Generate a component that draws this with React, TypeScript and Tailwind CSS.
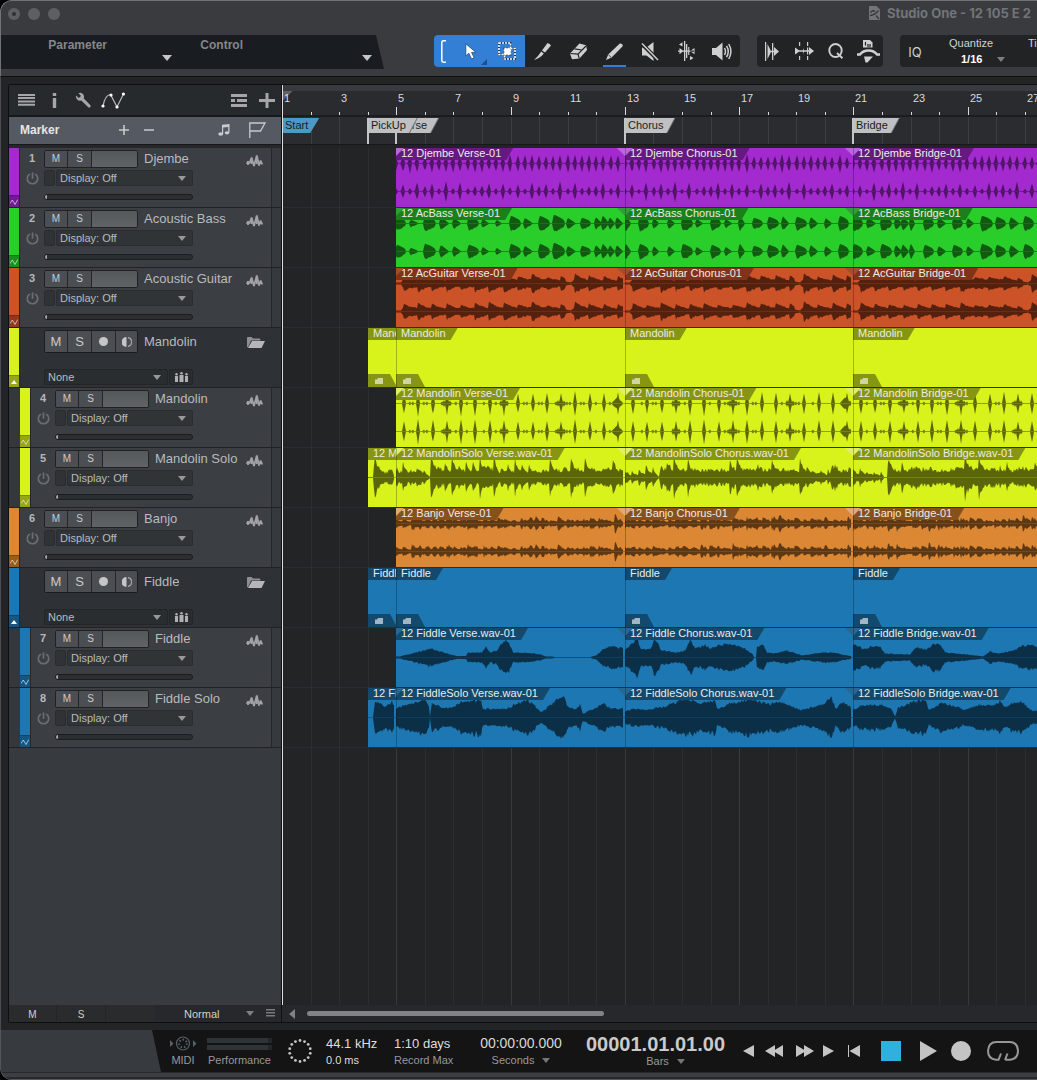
import React from "react";

/* ---------- timeline geometry ---------- */

const BAR_WIDTH = 28.57;
const BAR_COUNT = 48;
const barX = (bar: number) => Math.round((bar - 1) * BAR_WIDTH);
const barSpan = (from: number, to: number) => barX(to) - barX(from);
const bars = Array.from({ length: BAR_COUNT }, (_, i) => i + 1);

/* ---------- waveforms ---------- */

type Points = [number, number][];

function random(seed: number) {
  let s = seed;
  return () => {
    s = (s * 1664525 + 1013904223) % 4294967296;
    return s / 4294967296;
  };
}

function envelope(points: Points, x: number) {
  for (let i = 1; i < points.length; i++) {
    const [x0, a0] = points[i - 1];
    const [x1, a1] = points[i];
    if (x <= x1) return a0 + ((a1 - a0) * (x - x0)) / Math.max(1, x1 - x0);
  }
  return points[points.length - 1][1];
}

const bassVerse = [
  [0, 9, 7], [14, 8, 4], [28, 11, 8], [44, 8, 7], [57, 7, 6], [72, 10, 7], [86, 6, 5], [100, 5, 4],
  [114, 10, 8], [128, 8, 6], [143, 10, 8], [157, 11, 9], [171, 8, 6], [185, 9, 6], [199, 6, 7],
  [206, 6, 9], [213, 5, 7], [220, 6, 7],
];
const bassChorus = [
  [0, 5, 9], [14, 9, 8], [28, 5, 6], [43, 6, 6], [57, 10, 8], [71, 6, 5], [86, 9, 7], [100, 6, 5],
  [114, 5, 9], [128, 9, 6], [143, 10, 7], [157, 6, 8], [171, 10, 7], [185, 7, 7], [200, 6, 6], [214, 9, 8],
];
const bassBridge = [
  [0, 9, 8], [14, 8, 6], [28, 10, 8], [42, 6, 7], [49, 6, 8], [57, 4, 9], [71, 9, 7], [85, 7, 6],
  [100, 9, 7], [114, 6, 6], [128, 11, 8], [143, 9, 7], [157, 8, 7], [171, 9, 8], [185, 9, 6],
];

type Kind = "pulse" | "bass" | "guitar" | "mandolin" | "solo" | "banjo" | "smooth";

function amplitudes(kind: Kind, width: number, seed: number, channel: number, shape?: Points) {
  const rnd = random(seed * 7919 + 13);
  const out = new Array<number>(width + 1).fill(0.3);
  const peak = (at: number, half: number, amp: number) => {
    for (let x = Math.floor(at - half); x <= at + half; x++) {
      if (x < 0 || x > width) continue;
      const a = amp * (1 - Math.abs(x - at) / (half + 0.6));
      out[x] = Math.max(out[x], a);
    }
  };
  if (kind === "pulse") {
    const low = [3, 6, 2, 8, 5, 7, 3, 9, 2, 8, 3, 4, 5, 8, 3, 7];
    for (let i = 0; i * 7.15 < width; i++) {
      const jitter = rnd() * 3;
      const amp = channel === 0 ? 6.5 + jitter : low[i % 16] + jitter / 2;
      peak(Math.round(i * 7.15), 1.8, amp);
    }
  } else if (kind === "mandolin") {
    for (let i = 0; i * 14.28 + 8 < width; i++) {
      const at = Math.round(i * 14.28 + 8);
      const wide = i % 4 === 3;
      peak(at, 1.4, 9.5 + rnd() * 3);
      if (wide) {
        peak(at - 3, 1, 3.5);
        peak(at + 3, 1.2, 3);
      }
      if (rnd() > 0.35) peak(at + 6, 0.9, 2);
      if (rnd() > 0.5) peak(at + 9, 0.9, 2);
    }
    peak(width - 6, 5, 6);
  } else if (kind === "bass") {
    const hits = [bassVerse, bassChorus, bassBridge][seed % 3];
    hits.forEach(([start, len, amp]) => {
      for (let x = 0; x <= len && start + x <= width; x++) {
        const attack = Math.min(1, (x + 1.2) / 2);
        out[start + x] = Math.max(0.3, amp * attack * Math.pow(1 - x / (len + 1), len > 8 ? 0.45 : 0.9));
      }
    });
  } else if (kind === "guitar") {
    let hit = 5;
    for (let x = 0; x <= width; x++) {
      const body = envelope([[0, 1], [5, 1], [7, 4], [60, 3.5], [140, 4.5], [160, 4], [175, 1], [178, 4], [229, 3.5]], x);
      const phase = ((x + 7) % 14.28) / 14.28;
      if (phase < 0.07) hit = 2.5 + rnd() * 4;
      out[x] = body > 2 ? body * (0.75 + 0.3 * rnd()) + hit * Math.pow(1 - phase, 1.6) : body;
    }
  } else if (kind === "banjo") {
    let level = 5;
    let start = 0;
    let next = 0;
    for (let x = 0; x <= width; x++) {
      if (x >= next) {
        start = x;
        next = x + (rnd() > 0.4 ? 7 : 9);
        level = 3.5 + rnd() * 5;
      }
      const phase = (x - start) / 9;
      out[x] = 0.8 + level * (1 - phase * 0.85) * (0.45 + 0.65 * rnd());
    }
  } else if (kind === "solo") {
    let spike = 0;
    for (let x = 0; x <= width; x++) {
      spike *= 0.66;
      if (x % 7 === 0 && rnd() > 0.3) spike = 2 + Math.pow(rnd(), 1.6) * 14;
      const base = envelope(shape ?? [[0, 8], [229, 8]], x);
      out[x] = base < 1 ? 0.4 : base * (0.5 + 0.42 * rnd()) + spike * Math.min(1, base / 7);
    }
  } else {
    for (let x = 0; x <= width; x++) {
      const base = envelope(shape ?? [[0, 8]], x);
      out[x] = base < 1 ? base : base * (0.86 + 0.22 * rnd());
    }
  }
  return out;
}

function wavePath(amps: number[], center: number, skew: number) {
  const rnd = random(amps.length * 31 + skew);
  const top = amps.map((a, x) => `L${x} ${(center - a).toFixed(1)}`).join("");
  const bottom = amps
    .map((a, x) => `L${x} ${(center + a * (a > 2 ? 0.85 + 0.25 * rnd() : 1)).toFixed(1)}`)
    .reverse()
    .join("");
  return `M0 ${center}${top}${bottom}Z`;
}

/* ---------- song data ---------- */

interface Palette { clip: string; label: string; line: string; wave: string; fade: string; foot: string }

const purple: Palette = { clip: "bg-[#a32ace]", label: "bg-[#661a80]", line: "stroke-[#661a80]", wave: "fill-[#4f1466]", fade: "border-[#bd66dc]", foot: "bg-[#6f1d8c]" };
const green: Palette = { clip: "bg-[#2ace2a]", label: "bg-[#1b801b]", line: "stroke-[#1b801b]", wave: "fill-[#125a12]", fade: "border-[#2f9d38]", foot: "bg-[#1e8c20]" };
const red: Palette = { clip: "bg-[#cc5228]", label: "bg-[#803319]", line: "stroke-[#803319]", wave: "fill-[#55210f]", fade: "border-[#a64c2e]", foot: "bg-[#8c3a1c]" };
const yellow: Palette = { clip: "bg-[#d8f21b]", label: "bg-[#879612]", line: "stroke-[#879612]", wave: "fill-[#5b660b]", fade: "border-[#e0ee6a]", foot: "bg-[#96a615]" };
const orange: Palette = { clip: "bg-[#db8733]", label: "bg-[#87511e]", line: "stroke-[#87511e]", wave: "fill-[#5c3814]", fade: "border-[#e3a976]", foot: "bg-[#975c22]" };
const blue: Palette = { clip: "bg-[#1c77b3]", label: "bg-[#12496d]", line: "stroke-[#12496d]", wave: "fill-[#0b2f46]", fade: "border-[#266796]", foot: "bg-[#155682]" };

interface Track {
  name: string;
  number?: number;
  nested?: boolean;
  folder?: boolean;
  pickup?: string;
  labels: [string, string, string];
  palette: Palette;
  kind: Kind;
  mono?: boolean;
  shapes?: Points[];
}

const soloShapes: Points[] = [
  [[0, 12], [6, 7], [26, 7], [31, 4], [34, 1], [36, 13], [48, 9], [75, 8], [95, 12], [105, 3], [112, 8], [130, 7], [170, 10], [229, 10]],
  [[0, 9], [6, 3], [28, 6], [34, 1], [36, 13], [60, 9], [75, 10], [160, 11], [195, 6], [205, 3], [208, 15], [215, 9], [229, 9]],
  [[0, 12], [4, 5], [20, 4], [28, 3], [32, 0], [34, 0], [36, 13], [55, 6], [60, 12], [80, 8], [110, 13], [150, 10], [162, 6], [166, 12], [229, 10]],
  [[0, 0], [5, 0], [6, 14], [15, 6], [24, 10], [26, 2], [28, 0]],
];
const fiddleShapes: Points[] = [
  [[0, 1], [4, 1], [15, 4], [34, 9], [45, 6], [55, 3], [60, 1.5], [70, 1.5], [72, 5], [86, 5], [90, 11], [94, 5], [101, 7], [105, 13], [110, 19], [114, 13], [117, 5], [130, 5], [145, 3], [150, 1], [158, 0.8], [159, 0.3], [194, 0.3], [200, 2], [208, 9], [215, 12], [225, 10], [229, 8]],
  [[0, 8], [5, 12], [12, 19], [16, 9], [25, 8], [30, 19], [36, 8], [50, 5], [60, 7], [66, 18], [70, 9], [75, 11], [80, 13], [85, 9], [95, 13], [108, 13], [120, 9], [128, 3], [129, 0.3], [131, 0.3], [132, 12], [138, 13], [142, 5], [148, 4], [163, 7], [177, 2], [195, 5], [210, 5], [222, 2], [229, 1]],
  [[0, 12], [5, 13], [10, 8], [20, 12], [27, 11], [32, 4], [57, 3], [63, 11], [73, 8], [80, 13], [88, 13], [92, 5], [115, 3], [130, 1], [137, 6], [145, 4], [160, 7], [170, 12], [180, 12], [190, 10], [229, 8]],
];
const fiddleSoloShapes: Points[] = [
  [[0, 9], [12, 14], [30, 17], [33, 12], [34, 0.5], [36, 15], [45, 11], [57, 10], [62, 15], [85, 18], [87, 9], [110, 9], [130, 18], [138, 13], [145, 5], [157, 15], [168, 23], [171, 11], [180, 8], [184, 13], [187, 4], [200, 10], [208, 14], [215, 9], [229, 9]],
  [[0, 6], [10, 9], [20, 8], [40, 11], [60, 19], [75, 15], [90, 17], [92, 9], [105, 14], [125, 18], [145, 14], [155, 16], [175, 8], [190, 11], [200, 14], [206, 21], [211, 9], [218, 16], [229, 8]],
  [[0, 8], [10, 13], [30, 13], [38, 9], [42, 1], [45, 10], [60, 16], [72, 18], [76, 8], [90, 15], [112, 8], [125, 13], [140, 12], [147, 17], [152, 10], [162, 16], [170, 15], [180, 6], [190, 9], [229, 8]],
  [[0, 0], [5, 0], [7, 17], [15, 12], [18, 11], [24, 17], [26, 12], [27, 0], [28, 0]],
];

const labels = (prefix: string, suffix = ""): [string, string, string] => [
  `${prefix} Verse${suffix}-01`,
  `${prefix} Chorus${suffix}-01`,
  `${prefix} Bridge${suffix}-01`,
];

const tracks: Track[] = [
  { number: 1, name: "Djembe", labels: labels("12 Djembe"), palette: purple, kind: "pulse" },
  { number: 2, name: "Acoustic Bass", labels: labels("12 AcBass"), palette: green, kind: "bass" },
  { number: 3, name: "Acoustic Guitar", labels: labels("12 AcGuitar"), palette: red, kind: "guitar" },
  { folder: true, name: "Mandolin", pickup: "Mandolin", labels: ["Mandolin", "Mandolin", "Mandolin"], palette: yellow, kind: "solo" },
  { number: 4, nested: true, name: "Mandolin", labels: labels("12 Mandolin"), palette: yellow, kind: "mandolin" },
  { number: 5, nested: true, name: "Mandolin Solo", pickup: "12 MandolinSolo", labels: labels("12 MandolinSolo", ".wav"), palette: yellow, kind: "solo", mono: true, shapes: soloShapes },
  { number: 6, name: "Banjo", labels: labels("12 Banjo"), palette: orange, kind: "banjo" },
  { folder: true, name: "Fiddle", pickup: "Fiddle", labels: ["Fiddle", "Fiddle", "Fiddle"], palette: blue, kind: "smooth" },
  { number: 7, nested: true, name: "Fiddle", labels: labels("12 Fiddle", ".wav"), palette: blue, kind: "smooth", mono: true, shapes: fiddleShapes },
  { number: 8, nested: true, name: "Fiddle Solo", pickup: "12 FiddleSolo", labels: labels("12 FiddleSolo", ".wav"), palette: blue, kind: "smooth", mono: true, shapes: fiddleSoloShapes },
];

/* ---------- small icons ---------- */

const Down = ({ className = "" }: { className?: string }) => (
  <svg className={`h-[5px] w-2 shrink-0 ${className}`} viewBox="0 0 8 5" aria-hidden="true">
    <path d="M0 0H8L4 5Z" fill="currentColor" />
  </svg>
);

const DownLarge = () => (
  <svg className="mt-[19px] h-[6px] w-[10px] shrink-0 text-[#c4c6c8]" viewBox="0 0 10 6" aria-hidden="true">
    <path d="M0 0H10L5 6Z" fill="currentColor" />
  </svg>
);

const Automation = () => (
  <svg className="h-2 w-2" viewBox="0 0 8 8" fill="none" stroke="currentColor" strokeWidth="1" aria-hidden="true">
    <path d="M0 5.5L2.3 2L5 6.5L7.8 1.5" />
  </svg>
);

const TrackWave = () => (
  <svg className="h-[14px] w-[17px]" viewBox="0 0 17 14" fill="none" stroke="#a0a2a5" strokeWidth="1.8" strokeLinejoin="bevel" aria-hidden="true">
    <path d="M.8 10L2 7.500L3.400 9.500L5.600 3.500L8 12L10.800 1.500L13 11.500L14.600 6.500L16.200 10.500" />
    <path d="M5.600 5V10M10.800 5V10M2 8V11M14.500 8V10" />
  </svg>
);

const Power = () => (
  <svg className="h-[13px] w-[13px]" viewBox="0 0 13 13" fill="none" stroke="currentColor" strokeWidth="1.7" strokeLinecap="round" aria-hidden="true">
    <path d="M3.4 2.4A5.2 5.2 0 1 0 9.6 2.4M6.5 1V6" />
  </svg>
);

const FolderOpen = () => (
  <svg className="h-[11px] w-[18px]" viewBox="0 0 18 11" fill="#b4b6b8" aria-hidden="true">
    <path d="M0 10V1Q0 0 1 0H4.5L6 1.5H12.5Q13.5 1.5 13.5 3.5H4L1 10.500Z" fill="#8c8e91" />
    <path d="M5 4H18L14.5 11H1Z" />
  </svg>
);

/* ---------- header ---------- */

const toolClass = "flex h-8 items-center justify-center text-[#cfcfcf]";

const Cut = () => (
  <svg width="17" height="17" viewBox="0 0 17 17" fill="currentColor" aria-hidden="true">
    <path d="M13.500 0Q16 .5 17 2.500L11 9.5L8 7.5ZM7.2 8.5L9.8 10.5Q7 14.5 0 17Q4.5 13 7.2 8.5Z" />
  </svg>
);
const Eraser = () => (
  <svg width="17" height="17" viewBox="0 0 17 17" aria-hidden="true">
    <path d="M9.500 .5L16 2.2L17 7L9.5 15.5L2 16.2L0 10.5Z" fill="#cfcfcf" />
    <path d="M.5 10.5L8 11.2L16 3M8 11.2L9.3 15.6M4.500 5.8L12 7" fill="none" stroke="#222" strokeWidth="1.2" />
  </svg>
);
const Paint = () => (
  <svg width="17" height="17" viewBox="0 0 17 17" fill="currentColor" aria-hidden="true">
    <path d="M13.800 .4Q17 .3 16.7 3.2L5.6 14.4L0 17L2.2 11.4Z" />
    <path d="M2.4 11.8L5.2 14.4" stroke="#222" strokeWidth=".8" />
  </svg>
);
const Mute = () => (
  <svg width="18" height="19" viewBox="0 0 18 19" aria-hidden="true">
    <path d="M1 5.5H5.500L12.500 0V19L5.500 13.5H1Z" fill="#cfcfcf" />
    <path d="M1 2L17 18" stroke="#222" strokeWidth="4" />
    <path d="M1 1.5L17 18" stroke="#cfcfcf" strokeWidth="1.5" />
  </svg>
);
const Bend = () => (
  <svg width="17" height="20" viewBox="0 0 17 20" fill="currentColor" aria-hidden="true">
    <path d="M6 0H7.300V20H6ZM8 3H9.300V17H8ZM10.200 6H11.300V14H10.200Z" />
    <path d="M0 9.400H17V10.800H0ZM1.500 7L5.500 10.100L1.500 13.200ZM16.500 7L12 10.100L16.500 13.200Z" />
    <path d="M4.500 1.200V5.500L1 3.400ZM12 15L15.500 17L12 19.200Z" />
  </svg>
);
const Speaker = () => (
  <svg width="20" height="19" viewBox="0 0 20 19" aria-hidden="true">
    <path d="M0 6H4L10.5 .5V18.5L4 13H0Z" fill="#cfcfcf" />
    <path d="M12.5 6Q14.5 9.5 12.5 13M14.5 3.8Q18 9.5 14.5 15.2M16.800 2Q21 9.5 16.800 17" stroke="#cfcfcf" strokeWidth="1.5" fill="none" />
  </svg>
);

function Header() {
  return (
    <header className="flex h-[76px] shrink-0 flex-col overflow-hidden rounded-tl-xl border-t border-l border-[#6e7476] bg-[#393b3f]">
      <div className="flex h-[34px] shrink-0 items-start justify-between">
        <div className="flex gap-2 pt-[7px] pl-[7px]">
          <button type="button" aria-label="Close" className="flex size-3 items-center justify-center rounded-full bg-[#5c6063]">
            <span className="size-1 rounded-full bg-[#2e3032]" />
          </button>
          <button type="button" aria-label="Minimise" className="size-3 rounded-full bg-[#5c6063]" />
          <button type="button" aria-label="Zoom" className="size-3 rounded-full bg-[#5c6063]" />
        </div>
        <div className="flex w-[168px] shrink-0 items-center gap-[7px] pt-[3px] text-[#727477]">
          <svg className="h-[14px] w-[11px] shrink-0" viewBox="0 0 11 14" aria-hidden="true">
            <path d="M0 0H7.5L11 3.5V14H0Z" fill="currentColor" />
            <path d="M1.5 6.500Q4 3.500 6 5.500M1 9.500Q6 9 9.500 4.500M7 9.500L10 13" fill="none" stroke="#393b3f" strokeWidth="1.400" />
          </svg>
          <h1 className="font-['Inter',sans-serif] text-[13px] leading-[18px] font-bold whitespace-nowrap">Studio One - 12 105 E 2</h1>
        </div>
      </div>
      <div className="flex h-[34px] items-start">
        <div className="flex h-[34px] w-[383px] shrink-0 bg-[#191c21] text-[12px] font-bold text-[#85878a] [clip-path:polygon(0_0,375px_0,100%_100%,0_100%)]">
          <button type="button" className="flex w-[171px] justify-end gap-[55px] pt-px">
            <span>Parameter</span>
            <DownLarge />
          </button>
          <button type="button" className="flex w-[200px] justify-end gap-[119px] pt-px">
            <span>Control</span>
            <DownLarge />
          </button>
        </div>
        <div className="ml-[50px] flex h-8 w-[306px] shrink-0 items-center overflow-hidden rounded-[4px] bg-[#222325]">
          <div className="flex h-8 w-[91px] items-center bg-[#337fd6] text-white">
            <svg className="ml-[7px]" width="5" height="23" viewBox="0 0 5 23" fill="none" stroke="#fff" strokeWidth="1.5" aria-hidden="true">
              <path d="M5 .8H2.5Q.8 .8 .8 2.5V20.5Q.8 22.2 2.5 22.2H5" />
            </svg>
            <button type="button" aria-label="Arrow tool" className="flex h-8 w-[41px] items-center justify-end gap-1">
              <svg width="12" height="17" viewBox="0 0 12 17" aria-hidden="true">
                <path d="M.8 .8V13L3.8 10.2L6.6 16L9.2 14.8L6.6 9.4H11Z" fill="#fff" stroke="#1c4a80" strokeWidth=".8" />
              </svg>
              <svg className="mt-[21px]" width="6" height="6" viewBox="0 0 6 6" aria-hidden="true">
                <path d="M6 0V6H0Z" fill="#1d4f8b" />
              </svg>
            </button>
            <button type="button" aria-label="Range tool" className="flex h-8 w-[38px] items-center justify-center pl-px">
              <svg width="18" height="18" viewBox="0 0 18 18" fill="none" aria-hidden="true">
                <path d="M1 1H12.5V12.5H1ZM6.5 6.5H17V17H6.5Z" stroke="#143a66" strokeWidth="2" />
                <path d="M1 1H12.5V12.5H1ZM6.5 6.5H17V17H6.5Z" stroke="#fff" strokeWidth="1.6" strokeDasharray="2 1" />
                <path d="M6.5 6.5H12.5V12.5H6.5Z" fill="#fff" />
              </svg>
            </button>
          </div>
          <button type="button" aria-label="Split tool" className={`${toolClass} w-9`}><Cut /></button>
          <button type="button" aria-label="Eraser tool" className={`${toolClass} w-9`}><Eraser /></button>
          <button type="button" aria-label="Paint tool" className={`${toolClass} w-9 bg-[linear-gradient(#337fd6,#337fd6)] bg-[length:23px_2px] bg-[position:center_bottom] bg-no-repeat`}><Paint /></button>
          <button type="button" aria-label="Mute tool" className={`${toolClass} w-9`}><Mute /></button>
          <button type="button" aria-label="Bend tool" className={`${toolClass} w-9`}><Bend /></button>
          <button type="button" aria-label="Listen tool" className={`${toolClass} w-9`}><Speaker /></button>
        </div>
        <div className="ml-[17px] flex h-8 w-[126px] shrink-0 items-center rounded-[4px] bg-[#222325]">
          <button type="button" aria-label="Detect transients" className={`${toolClass} w-[29px]`}>
            <svg width="14" height="19" viewBox="0 0 14 19" fill="currentColor" aria-hidden="true">
              <path d="M0 0H1.200V19H0ZM2.500 2L5.500 8V11L2.500 17ZM7 1H8.3V18H7ZM5 8.8H11V10.2H5ZM9 5L14 9.5L9 14Z" />
            </svg>
          </button>
          <button type="button" aria-label="Stretch" className={`${toolClass} w-9`}>
            <svg width="19" height="18" viewBox="0 0 19 18" fill="currentColor" aria-hidden="true">
              <path d="M4 0H5.2V4H4ZM4 14H5.2V18H4ZM12 0H13.2V4H12ZM12 14H13.2V18H12ZM1 8.3H15V9.7H1ZM0 5.5L5 9L0 12.5ZM14 5L19 9L14 13ZM8 6L9.2 9L8 12ZM12 5.5H13.2V12.5H12Z" />
            </svg>
          </button>
          <button type="button" aria-label="Quantize" className={`${toolClass} w-[28px]`}>
            <svg width="16" height="16" viewBox="0 0 16 16" fill="none" stroke="currentColor" strokeWidth="1.9" aria-hidden="true">
              <ellipse cx="7.5" cy="7.5" rx="6.2" ry="6.5" />
              <path d="M9 10L14.5 15.2" />
            </svg>
          </button>
          <button type="button" aria-label="Audio bend" className={`${toolClass} flex-1 pl-1`}>
            <svg width="23" height="23" viewBox="0 0 23 23" fill="currentColor" aria-hidden="true">
              <path d="M6 0H13L15.5 2.5V7.500H6Z" />
              <path d="M8.500 2V5.500M11 4V7.500M13 4V7.500" stroke="#222" strokeWidth="1.200" />
              <path d="M0 14.5H3Q6 10.500 11.5 10.500T20 14.5H23" fill="none" stroke="currentColor" strokeWidth="2.4" />
              <path d="M7 16.500H16L10.5 22.5L8.5 22.5Z" />
            </svg>
          </button>
        </div>
        <div className="ml-[17px] flex h-8 w-[260px] shrink-0 rounded-[4px] bg-[#222325] text-[11px] leading-4 text-[#cfcfcf]">
          <button type="button" className="w-[30px] pt-px font-['Inter',sans-serif] text-[13px]">IQ</button>
          <div className="flex w-[82px] flex-col items-center text-[#d2d2d2]">
            <label htmlFor="quantize">Quantize</label>
            <div className="flex items-center gap-2 pl-6">
              <select id="quantize" className="w-[28px] appearance-none bg-transparent font-bold text-white outline-none"><option>1/16</option></select>
              <Down className="text-[#7c7e80]" />
            </div>
          </div>
          <div className="flex w-[80px] flex-col items-center text-[#d2d2d2]">
            <label htmlFor="timebase">Timebase</label>
            <select id="timebase" className="w-9 appearance-none bg-transparent pl-1 font-bold text-white outline-none"><option>Bars</option></select>
          </div>
        </div>
      </div>
    </header>
  );
}

/* ---------- track list ---------- */

function TrackTools() {
  return (
    <div className="flex h-[32px] items-center border-b-2 border-[#17181a] bg-[#272a2d] pr-[6px] pl-[9px] text-[#a4a6a8]">
      <button type="button" aria-label="Track list">
        <svg width="17" height="12" viewBox="0 0 17 12" fill="currentColor" aria-hidden="true"><path d="M0 0H17V2H0ZM0 3H17V5H0ZM0 6.5H17V8.5H0ZM0 9.7H17V11.7H0Z" /></svg>
      </button>
      <button type="button" aria-label="Inspector" className="ml-[17px]">
        <svg width="5" height="15" viewBox="0 0 5 15" fill="currentColor" aria-hidden="true"><path d="M.8 0H4.2V3H.8ZM.8 5H4.2V15H.8Z" /></svg>
      </button>
      <button type="button" aria-label="Options" className="ml-[18px]">
        <svg width="16" height="16" viewBox="0 0 16 16" aria-hidden="true">
          <path d="M1.2 3.5L3.8 6.1L6 3.9L3.5 1.2A4 4 0 0 1 9 5.6L8.6 6.3L15.2 12.9A1.4 1.4 0 0 1 13 15.1L6.3 8.5A4 4 0 0 1 1.2 3.5Z" fill="currentColor" />
        </svg>
      </button>
      <button type="button" aria-label="Automation" className="ml-[10px]">
        <svg width="24" height="17" viewBox="0 0 24 17" fill="none" stroke="#b8babc" strokeWidth="1.2" aria-hidden="true">
          <path d="M2 14Q4 3 9.500 2.500L16 15L22.500 2" />
          <g fill="#fff" stroke="none"><circle cx="2" cy="14" r="1.6" /><circle cx="10" cy="3" r="1.6" /><circle cx="16" cy="15" r="1.6" /><circle cx="22.400" cy="2" r="1.600" /></g>
        </svg>
      </button>
      <div className="flex-1" />
      <button type="button" aria-label="Groups">
        <svg width="16" height="13" viewBox="0 0 16 13" fill="currentColor" aria-hidden="true"><path d="M0 0H16V3H0ZM0 5H4V8H0ZM6 5H16V8H6ZM0 10H16V13H0Z" /></svg>
      </button>
      <button type="button" aria-label="Add track" className="ml-3">
        <svg width="16" height="15" viewBox="0 0 16 15" fill="currentColor" aria-hidden="true"><path d="M6.500 0H9.500V6H16V9H9.500V15H6.500V9H0V6H6.500Z" /></svg>
      </button>
    </div>
  );
}

function MarkerHeader() {
  return (
    <div className="flex h-[27px] items-center bg-[#555961] pr-[15px] pb-px pl-[11px] text-[#c8cacc]">
      <span className="w-[99px] text-[12px] font-bold text-[#e4e5e6]">Marker</span>
      <button type="button" aria-label="Add marker">
        <svg width="10" height="10" viewBox="0 0 10 10" stroke="currentColor" strokeWidth="1.600" aria-hidden="true"><path d="M5 0V10M0 5H10" /></svg>
      </button>
      <button type="button" aria-label="Remove marker" className="ml-[15px]">
        <svg width="10" height="10" viewBox="0 0 10 10" stroke="currentColor" strokeWidth="1.600" aria-hidden="true"><path d="M0 5H10" /></svg>
      </button>
      <div className="flex-1" />
      <button type="button" aria-label="Timebase">
        <svg width="12" height="12" viewBox="0 0 12 12" fill="currentColor" aria-hidden="true">
          <path d="M4 .8L11.500 0V8.500H10.200V3L5.200 3.500V10H4Z" />
          <ellipse cx="2.700" cy="10" rx="2.500" ry="1.700" /><ellipse cx="9" cy="8.800" rx="2.300" ry="1.600" />
        </svg>
      </button>
      <button type="button" aria-label="Marker flag" className="ml-[19px]">
        <svg width="17" height="16" viewBox="0 0 17 16" fill="none" stroke="currentColor" strokeWidth="1.300" aria-hidden="true"><path d="M.8 16V1H16L11.500 9H.8" /></svg>
      </button>
    </div>
  );
}

const keyClass = "border-r border-[#232527] bg-[#4b4e52] text-center";
const selectClass = "h-4 w-full appearance-none rounded-[2px] border pl-[3px] text-[11px] leading-[13px] text-[#b9bbbd] outline-none";

function AudioHeader({ track }: { track: Track }) {
  return (
    <>
      <div className="flex w-6 flex-col items-center pt-px text-[#b6b8ba]">
        <span className="text-[11px] leading-[18px] font-bold">{track.number}</span>
        <button type="button" aria-label={`Power ${track.name}`} className="mt-[5px] text-[#6b6e71]"><Power /></button>
      </div>
      <div className="flex min-w-0 flex-1 flex-col">
        <div className="flex h-[22px] items-center">
          <div className="flex h-[18px] w-[94px] shrink-0 overflow-hidden rounded-[2px] border border-[#1f2123] text-[10px] leading-4 text-[#c9cbcd]">
            <button type="button" aria-label={`Mute ${track.name}`} className={`${keyClass} w-[23px]`}>M</button>
            <button type="button" aria-label={`Solo ${track.name}`} className={`${keyClass} w-[24px]`}>S</button>
            <span className="flex-1 bg-linear-to-b from-[#54585b] to-[#606467]" />
          </div>
          <span className="ml-[6px] flex-1 text-[13px] whitespace-nowrap text-[#b9bbbd]">{track.name}</span>
        </div>
        <div className="flex h-4 w-[149px] gap-px group-data-nested:w-[138px]">
          <span className="w-[11px] rounded-[2px] border border-[#2a2c2f] bg-[#303336]" />
          <div className="relative flex flex-1 items-center">
            <select aria-label={`${track.name} automation`} className={`${selectClass} border-[#2a2c2f] bg-[#303437]`}><option>Display: Off</option></select>
            <Down className="pointer-events-none absolute right-[7px] text-[#96989a]" />
          </div>
        </div>
        <input
          type="range"
          aria-label={`${track.name} value`}
          defaultValue={0}
          className="mt-2 h-[6px] w-[149px] appearance-none overflow-hidden rounded-full border border-[#1b1d1f] bg-[#2c2f32] group-data-nested:w-[138px] [&::-webkit-slider-thumb]:h-1 [&::-webkit-slider-thumb]:w-[2px] [&::-webkit-slider-thumb]:appearance-none [&::-webkit-slider-thumb]:bg-[#a6a8aa]"
        />
      </div>
      <div className="w-[25px] pt-[6px]"><TrackWave /></div>
      <div className="w-[10px] border-l border-[#25272a] bg-[#36393e]" />
    </>
  );
}

function FolderHeader({ track }: { track: Track }) {
  return (
    <>
      <div className="w-6" />
      <div className="flex min-w-0 flex-1 flex-col pt-[2px]">
        <div className="flex h-[23px] items-center">
          <div className="flex h-[23px] w-[94px] shrink-0 overflow-hidden rounded-[2px] border border-[#1b1d1f] text-[13px] leading-5 text-[#c9cbcd]">
            <button type="button" aria-label={`Mute ${track.name} folder`} className={`${keyClass} w-[23px]`}>M</button>
            <button type="button" aria-label={`Solo ${track.name} folder`} className={`${keyClass} w-[24px]`}>S</button>
            <button type="button" aria-label={`Record ${track.name} folder`} className={`${keyClass} flex w-6 items-center justify-center`}>
              <span className="size-[9px] rounded-full bg-[#c4c6c8]" />
            </button>
            <button type="button" aria-label={`Monitor ${track.name} folder`} className="flex flex-1 items-center justify-center bg-[#4b4e52]">
              <svg width="10" height="10" viewBox="0 0 10 10" aria-hidden="true"><path d="M4.500 0V10A5 5 0 0 1 4.500 0Z" fill="#c4c6c8" /><path d="M6 .5A4.600 4.600 0 0 1 6 9.500" fill="none" stroke="#a4a6a8" strokeWidth="1.300" /></svg>
            </button>
          </div>
          <span className="ml-[6px] flex-1 text-[13px] whitespace-nowrap text-[#b9bbbd]">{track.name}</span>
        </div>
        <div className="mt-4 flex h-4 w-[149px] gap-px">
          <div className="relative flex flex-1 items-center">
            <select aria-label={`${track.name} bus`} className={`${selectClass} border-[#232629] bg-[#2a2d30]`}><option>None</option></select>
            <Down className="pointer-events-none absolute right-[7px] text-[#96989a]" />
          </div>
          <button type="button" aria-label={`Group ${track.name}`} className="flex w-6 items-center justify-center rounded-[2px] border border-[#232629] bg-[#2a2d30]">
            <svg width="13" height="10" viewBox="0 0 13 10" fill="#aeb0b2" aria-hidden="true"><path d="M0 4H3V10H0ZM4.500 3H8.500V10H4.500ZM10 4H13V10H10Z" /><circle cx="1.500" cy="2.300" r="1.200" /><circle cx="6.500" cy="1.300" r="1.300" /><circle cx="11.500" cy="2.300" r="1.200" /></svg>
          </button>
        </div>
      </div>
      <div className="w-[34px] pt-[9px]"><FolderOpen /></div>
    </>
  );
}

function TrackHeader({ track }: { track: Track }) {
  return (
    <li
      data-nested={track.nested ? "" : undefined}
      className={`group flex h-[60px] border-b border-[#202224] data-nested:pl-[11px] ${track.folder ? "bg-[#2e3135]" : track.nested ? "bg-[#3b3e43] bg-[linear-gradient(90deg,#34373c_11px,transparent_11px)]" : "bg-[#3b3e43]"}`}
    >
      <div className={`flex w-[11px] flex-col justify-end border-r border-[#25272a] ${track.palette.clip}`}>
        <span className={`flex h-3 items-center justify-center border-t border-black/20 text-white/60 ${track.palette.foot}`}>
          {track.folder ? (
            <svg className="h-1 w-[6px]" viewBox="0 0 6 4" aria-hidden="true"><path d="M3 0L6 4H0Z" fill="#fff" /></svg>
          ) : (
            <Automation />
          )}
        </span>
      </div>
      {track.folder ? <FolderHeader track={track} /> : <AudioHeader track={track} />}
    </li>
  );
}

function TrackList() {
  return (
    <aside className="flex w-[273px] shrink-0 flex-col border-r border-[#101112] bg-[#373b40]">
      <TrackTools />
      <MarkerHeader />
      <div className="h-1 border-t border-[#17181a] bg-[#25272a]" />
      <ul className="flex flex-col">
        {tracks.map((track) => <TrackHeader key={`${track.number ?? "folder"}-${track.name}`} track={track} />)}
      </ul>
      <div className="flex-1" />
      <div className="flex h-[17px] items-center bg-[#26282b] text-[11px] leading-[17px] text-[#d0d1d3]">
        <button type="button" className="h-[17px] w-[48px] border-r border-[#232527] bg-[#2a2b2c] pt-px text-[10px]">M</button>
        <button type="button" className="h-[17px] w-[49px] border-r border-[#232527] bg-[#2a2b2c] pt-px text-[10px]">S</button>
        <span className="h-[17px] w-12 bg-[#2a2b2c]" />
        <div className="relative flex flex-1 items-center">
          <select aria-label="Track height" className="w-full appearance-none bg-transparent pt-px pl-[30px] outline-none"><option>Normal</option></select>
          <Down className="pointer-events-none absolute right-[27px] text-[#7e8082]" />
          <svg className="pointer-events-none absolute right-[6px]" width="9" height="9" viewBox="0 0 9 9" fill="#77797d" aria-hidden="true"><path d="M0 0H9V1.500H0ZM0 3H9V4.500H0ZM0 6H9V7.500H0Z" /></svg>
        </div>
      </div>
    </aside>
  );
}

/* ---------- timeline ---------- */

function Grid({ tone }: { tone: "marker" | "lane" }) {
  return (
    <div className="pointer-events-none absolute inset-0 flex overflow-hidden" aria-hidden="true">
      {bars.map((bar) => (
        <span
          key={bar}
          style={{ width: barSpan(bar, bar + 1) }}
          className={`shrink-0 border-l ${tone === "marker" ? "border-[#3c3e40]" : bar % 4 === 1 ? "border-[#38393b]" : "border-[#2c2e30]"}`}
        />
      ))}
    </div>
  );
}

function Ruler() {
  return (
    <div className="flex h-[32px] border-t-[6px] border-b-2 border-t-[#393a3f] border-b-[#1b1c1e] bg-[#292b2e]">
      {bars.map((bar) => (
        <div key={bar} style={{ width: barSpan(bar, bar + 1) }} className="flex shrink-0 flex-col justify-between">
          <span className={`h-4 pl-[2px] text-[11px] leading-[15px] whitespace-nowrap text-[#d9dadb] ${bar === 1 ? "bg-[linear-gradient(135deg,#5e6065_7px,transparent_8px)]" : ""}`}>
            {bar % 2 ? bar : ""}
          </span>
          {bar > 1 && <span className={`w-px bg-[#d8d9da] ${bar % 4 === 1 ? "h-2" : "h-[3px]"}`} />}
        </div>
      ))}
    </div>
  );
}

const markers = [
  { name: "Verse", bar: 5 },
  { name: "PickUp", bar: 4 },
  { name: "Chorus", bar: 13 },
  { name: "Bridge", bar: 21 },
];

function MarkerLane() {
  return (
    <div className="relative h-[27px] overflow-hidden bg-[#2b2c2f] text-[11px] leading-[14px] text-[#1c1d1e]">
      <Grid tone="marker" />
      <span className="absolute top-px left-0 h-[15px] bg-[#4b99c7] pr-[11px] pl-[3px] [clip-path:polygon(0_0,100%_0,calc(100%-9px)_100%,0_100%)]">Start</span>
      {markers.map((marker) => (
        <span key={marker.name} style={{ left: barX(marker.bar) - 1 }} className="absolute top-px h-[26px] border-l-2 border-[#c4c5c6]">
          <span className="block bg-[#6d6f71] [clip-path:polygon(0_0,100%_0,calc(100%-8px)_100%,0_100%)]">
            <span className="block h-[15px] bg-[#bfc0c1] pr-[12px] pl-[2px] [clip-path:polygon(0_0,calc(100%-1px)_0,calc(100%-9px)_100%,0_100%)]">{marker.name}</span>
          </span>
        </span>
      ))}
    </div>
  );
}

function Clip({ track, label, section, from, to }: { track: Track; label: string; section: number; from: number; to: number }) {
  const width = barSpan(from, to);
  const { palette } = track;
  const channels = track.folder ? [] : track.mono ? [29] : [15, 43];
  const seed = track.kind === "bass" ? section : (track.number ?? 0) * 11 + section;
  const pickup = section === 3;
  const edge = section === 1 || section === 2 || (section === 0 && track.pickup !== undefined);
  return (
    <div style={{ width }} className={`relative flex h-[59px] shrink-0 flex-col items-start justify-between overflow-hidden ${palette.clip}`}>
      {channels.length > 0 && (
        <svg className={`absolute inset-0 ${palette.wave}`} width={width} height="59" viewBox={`0 0 ${width} 59`} aria-hidden="true">
          {channels.map((center, i) => (
            <path key={center} d={wavePath(amplitudes(track.kind, width - 2, seed, i, track.shapes?.[section]), center + 0.5, section)} />
          ))}
          {channels.map((center) => (
            <path key={`line-${center}`} d={`M0 ${center}.5H${width}`} className={palette.line} strokeOpacity=".6" />
          ))}
        </svg>
      )}
      <span className={`relative h-3 pr-3 pl-[5px] text-[11px] leading-[11px] whitespace-nowrap text-[#ecece6] [clip-path:polygon(0_0,100%_0,calc(100%-7px)_100%,0_100%)] ${palette.label}`}>
        {label}
      </span>
      {track.folder ? (
        <span className={`relative flex h-[13px] w-[29px] items-center pl-[7px] [clip-path:polygon(0_0,22px_0,100%_100%,0_100%)] ${palette.label}`}>
          <svg width="8" height="6" viewBox="0 0 8 6" fill="#fff" fillOpacity=".6" aria-hidden="true"><path d="M0 6V1.500H2L3 0H8V6Z" /></svg>
        </span>
      ) : (
        !pickup && (
          <>
            <span className={`absolute top-0 left-0 size-0 border-t-[8px] !border-r-[8px] !border-r-transparent ${palette.fade}`} />
            <span className={`absolute top-0 right-0 size-0 border-t-[8px] !border-l-[8px] !border-l-transparent ${palette.fade}`} />
          </>
        )
      )}
      {edge && <span className="absolute inset-y-0 left-0 w-px bg-black/25" />}
    </div>
  );
}

function Lane({ track }: { track: Track }) {
  const start = track.pickup ? 4 : 5;
  return (
    <div className="relative flex h-[60px] overflow-hidden border-b border-[#2b2c2f]">
      <div style={{ width: barSpan(1, start) }} className="shrink-0" />
      {track.pickup && <Clip track={track} label={track.pickup} section={3} from={4} to={5} />}
      <Clip track={track} label={track.labels[0]} section={0} from={5} to={13} />
      <Clip track={track} label={track.labels[1]} section={1} from={13} to={21} />
      <Clip track={track} label={track.labels[2]} section={2} from={21} to={29} />
    </div>
  );
}

function Timeline() {
  return (
    <main className="relative flex min-w-0 flex-1 flex-col overflow-hidden bg-[#222426]">
      <Ruler />
      <MarkerLane />
      <div className="h-1 border-t border-[#17181a] bg-[#222325]" />
      <div className="relative flex-1">
        <Grid tone="lane" />
        {tracks.map((track) => <Lane key={`${track.number ?? "folder"}-${track.name}`} track={track} />)}
      </div>
      <div className="flex h-[17px] items-center bg-[#26282b] pl-[7px]">
        <button type="button" aria-label="Scroll left">
          <svg width="6" height="10" viewBox="0 0 6 10" fill="#7f8183" aria-hidden="true"><path d="M6 0V10L0 5Z" /></svg>
        </button>
        <div className="ml-3 h-[5px] w-[297px] rounded-full bg-[#828384]" />
      </div>
      <span className="absolute top-0 bottom-[17px] left-0 w-px bg-[#dcdddd]" />
    </main>
  );
}

/* ---------- transport ---------- */

function Transport() {
  const dots = Array.from({ length: 14 }, (_, i) => (i * Math.PI * 2) / 14);
  return (
    <footer className="shrink-0 overflow-hidden rounded-bl-xl border-b border-l border-[#53565a] bg-[#373a3e]">
      <div className="bg-[#373a3e] pl-[151px]">
        <div className="flex h-[42px] overflow-hidden bg-[#141414] text-[11px] text-[#97999b] [clip-path:polygon(0_0,100%_0,100%_100%,9px_100%)]">
          <div className="flex w-[55px] shrink-0 flex-col items-center pt-[6px] pl-[7px]">
            <svg width="28" height="15" viewBox="0 0 28 15" fill="none" stroke="#53616a" aria-hidden="true">
              <path d="M1 4L4.500 7.500L1 11ZM24 4L27.500 7.500L24 11Z" fill="#53616a" stroke="none" />
              <circle cx="14" cy="7.500" r="6.500" strokeWidth="1.200" />
              <circle cx="14" cy="7.500" r="3.800" strokeWidth="2" strokeDasharray="1.500 1.900" />
            </svg>
            <span className="leading-[18px]">MIDI</span>
          </div>
          <div className="flex w-[65px] shrink-0 flex-col pt-[8px]">
            <div className="flex flex-col gap-[2px]">
              <span className="h-[5px] border-r-4 border-[#242628] bg-[#2e3336]" />
              <span className="h-[5px] border-r-4 border-[#242628] bg-[#2e3336]" />
            </div>
            <span className="mt-px text-center leading-[18px]">Performance</span>
          </div>
          <div className="flex w-[46px] shrink-0 items-center justify-end pr-[6px]">
            <svg width="24" height="24" viewBox="0 0 24 24" fill="#c4c4c4" aria-hidden="true">
              {dots.map((a) => <circle key={a} cx={12 + 10.5 * Math.sin(a)} cy={12 - 10.5 * Math.cos(a)} r="1.400" />)}
            </svg>
          </div>
          <div className="flex w-[76px] shrink-0 flex-col pt-[5px] pl-2 text-[#dedede]">
            <span className="text-[13px] leading-[17px] whitespace-nowrap">44.1 kHz</span>
            <span className="leading-4">0.0 ms</span>
          </div>
          <div className="flex w-[72px] shrink-0 flex-col">
            <span className="pt-[5px] text-[13px] leading-[17px] text-[#dedede]">1:10 days</span>
            <span className="leading-4 whitespace-nowrap">Record Max</span>
          </div>
          <div className="flex w-[110px] shrink-0 flex-col items-center">
            <span className="pt-[5px] text-[14px] leading-[17px] text-[#d8d8d8]">00:00:00.000</span>
            <button type="button" className="flex items-center gap-2 leading-4">Seconds <Down className="text-[#747678]" /></button>
          </div>
          <div className="flex w-[159px] shrink-0 flex-col items-center">
            <span className="pt-[5px] text-[20px] leading-[19px] font-bold text-[#cacaca]">00001.01.01.00</span>
            <button type="button" className="flex items-center gap-2 pl-5 leading-[14px]">Bars <Down className="text-[#747678]" /></button>
          </div>
          <div className="flex shrink-0 items-center text-[#c4c4c4]">
            <button type="button" aria-label="Previous bar" className="flex w-[26px] justify-center">
              <svg width="11" height="12" viewBox="0 0 11 12" fill="currentColor"><path d="M11 0V12L0 6Z" /></svg>
            </button>
            <button type="button" aria-label="Rewind" className="flex w-[26px] justify-center">
              <svg width="18" height="12" viewBox="0 0 18 12" fill="currentColor"><path d="M10 0V12L0 6ZM18 0V12L8 6Z" /></svg>
            </button>
            <button type="button" aria-label="Fast forward" className="flex w-[36px] justify-center">
              <svg width="18" height="12" viewBox="0 0 18 12" fill="currentColor"><path d="M0 0V12L10 6ZM8 0V12L18 6Z" /></svg>
            </button>
            <button type="button" aria-label="Next bar" className="flex w-[11px] justify-center">
              <svg width="11" height="12" viewBox="0 0 11 12" fill="currentColor"><path d="M0 0V12L11 6Z" /></svg>
            </button>
            <button type="button" aria-label="Return to zero" className="flex w-[40px] justify-center">
              <svg width="12" height="12" viewBox="0 0 12 12" fill="currentColor"><path d="M0 0H1V12H0ZM12 0V12L1.500 6Z" /></svg>
            </button>
            <button type="button" aria-label="Stop" className="flex w-[34px] justify-center"><span className="size-5 bg-[#30b0dc]" /></button>
            <button type="button" aria-label="Play" className="flex w-[40px] justify-center">
              <svg width="17" height="20" viewBox="0 0 17 20" fill="currentColor"><path d="M0 0V20L17 10Z" /></svg>
            </button>
            <button type="button" aria-label="Record" className="flex w-[26px] justify-center"><span className="size-5 rounded-full bg-[#c4c4c4]" /></button>
            <button type="button" aria-label="Loop" className="flex w-[58px] justify-center">
              <svg width="32" height="20" viewBox="0 0 32 20" fill="none" stroke="#979797" strokeWidth="2">
                <path d="M18 19L20.500 12.500M18.200 18.800H23Q31 18 31 9.800Q30.500 1 22.500 1H9.500Q1.500 1 1 9.800Q1 18 9 18.800H11.500L14 12.500" />
              </svg>
            </button>
          </div>
        </div>
      </div>
      <div className="h-[7px] border-t border-b-2 border-t-[#26282a] border-b-[#25272a] bg-[#3b3f44]" />
    </footer>
  );
}

export default function App() {
  return (
    <div className="flex min-h-screen flex-col overflow-hidden bg-black font-['Liberation_Sans',Arial,sans-serif]">
      <Header />
      <div className="flex flex-1 flex-col border-t border-l border-t-[#0f1011] border-l-[#4a4c4f] bg-[#222426] pt-[7px] pb-[7px] pl-[7px]">
        <div className="flex flex-1 overflow-hidden rounded-l-[3px] border border-r-0 border-[#0e0f10]">
          <TrackList />
          <Timeline />
        </div>
      </div>
      <Transport />
    </div>
  );
}
